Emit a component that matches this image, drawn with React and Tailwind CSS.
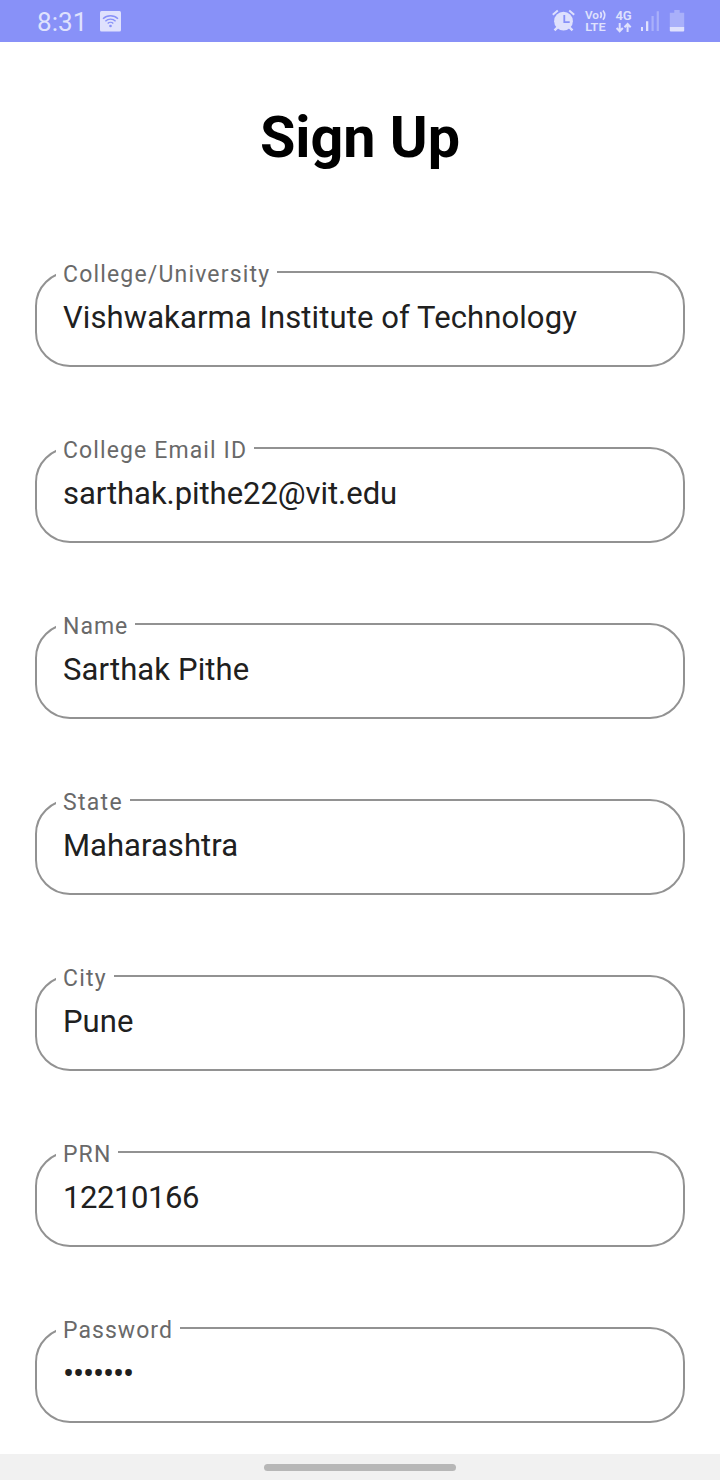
import React from "react";

const fields = [
  { label: "College/University", value: "Vishwakarma Institute of Technology", notch: "w-[221px] tracking-[1.17px]", spacing: "tracking-[0.1px]" },
  { label: "College Email ID", value: "sarthak.pithe22@vit.edu", notch: "w-[198px] tracking-[1.12px]", spacing: "tracking-[-0.05px]" },
  { label: "Name", value: "Sarthak Pithe", notch: "w-[79px] tracking-[1px]", spacing: "tracking-[0.12px]" },
  { label: "State", value: "Maharashtra", notch: "w-[74px] tracking-[1.3px]", spacing: "tracking-[0.04px]" },
  { label: "City", value: "Pune", notch: "w-[58px] tracking-[1.2px]", spacing: "tracking-[0.04px]" },
  { label: "PRN", value: "12210166", notch: "w-[62px] tracking-[1.1px]", spacing: "tracking-[-0.42px]" },
  { label: "Password", value: "•••••••", notch: "w-[124px] tracking-[1.05px]", secret: true },
];

function StatusBar() {
  return (
    <header className="flex h-[42px] shrink-0 items-center bg-[#8891f8] text-[#dfe1fd]">
      <span className="ml-[37px] w-[50px] whitespace-nowrap text-[26px] leading-[42px] tracking-[0.1px] pt-[2px]">8:31</span>
      <svg className="ml-[13px]" width="21" height="21" viewBox="0 0 21 21">
        <rect width="21" height="20.5" rx="1.5" fill="#dfe1fd" />
        <g fill="none" stroke="#8891f8" strokeWidth="1.4">
          <path d="M3 7.8a10.6 10.6 0 0 1 15 0" />
          <path d="M5.4 10.2a7.2 7.2 0 0 1 10.2 0" />
          <path d="M7.7 12.5a4 4 0 0 1 5.6 0" />
        </g>
        <circle cx="10.5" cy="15" r="1.3" fill="#8891f8" />
      </svg>
      <svg className="ml-auto mr-[35px]" width="134" height="42" viewBox="551 0 134 42">
        <g fill="none" stroke="#dfe1fd">
          <path d="M552.8 14.8l5-4.2M574.2 14.8l-5-4.2" strokeWidth="2" />
          <path d="M557.5 27.3l-3 3M569.5 27.3l3 3" strokeWidth="2.4" />
        </g>
        <circle cx="563.5" cy="21.2" r="9.4" fill="#dfe1fd" />
        <path d="M564.3 15v7.2h5.4" fill="none" stroke="#8891f8" strokeWidth="1.8" />
        <g fill="#dfe1fd" fontFamily="Roboto, sans-serif" fontWeight="600">
          <text x="585" y="18.8" fontSize="11.5" textLength="14" lengthAdjust="spacingAndGlyphs">Vo</text>
          <text x="585.2" y="31.2" fontSize="11.8" textLength="20.4" lengthAdjust="spacingAndGlyphs">LTE</text>
          <text x="615.4" y="20" fontSize="13" textLength="16.4" lengthAdjust="spacingAndGlyphs">4G</text>
        </g>
        <g fill="none" stroke="#dfe1fd" strokeWidth="1.6">
          <path d="M600.4 12q2 3 0 6.2M603 10.4q3.6 4.7 0 9.4" />
        </g>
        <path d="M619.7 23v8M616.6 28l3.1 3.2 3.1-3.2M627.6 32v-8M624.5 27.2l3.1-3.2 3.1 3.2" fill="none" stroke="#dfe1fd" strokeWidth="2" />
        <path d="M641 27h2v4h-2zM646 21.3h2.3v9.7H646z" fill="#dfe1fd" />
        <path d="M651.5 16h2.2v15h-2.2zM656.7 11.3h2.2V31h-2.2z" fill="#a9b0fa" />
        <path d="M674.3 10h5.4v2.8h4.5v14.4h-14.4V12.8h4.5z" fill="#a9b0fa" />
        <path d="M669.8 27h14.4v3.5q0 1-1 1h-12.4q-1 0-1-1z" fill="#dfe1fd" />
      </svg>
    </header>
  );
}

function OutlinedField({ label, value, notch, spacing, secret }) {
  return (
    <div className="relative h-24 shrink-0 rounded-[35px] border-2 border-[#929292] pl-[26px]">
      <span className={`absolute left-[19px] -top-[13px] h-8 whitespace-nowrap bg-white pl-[7px] text-[23px] leading-[29px] font-[370] text-[#696969] ${notch}`}>
        {label}
      </span>
      {secret ? (
        <div className="relative pt-[21px] text-[33px] leading-[48px] tracking-[-1.15px] text-[#202020]">{value}</div>
      ) : (
        <div className={`relative whitespace-nowrap pt-[21px] text-[31px] leading-[48px] font-[380] text-[#202020] ${spacing}`}>{value}</div>
      )}
    </div>
  );
}

export default function App() {
  return (
    <div className="flex h-[1480px] w-[720px] flex-col overflow-hidden bg-white font-['Roboto',sans-serif]">
      <StatusBar />
      <main className="flex grow flex-col px-[35px] pt-[61px]">
        <h1 className="h-[168px] text-center text-[57.5px] font-bold leading-[70px] text-black">Sign Up</h1>
        <div className="flex flex-col gap-20">
          {fields.map((f) => (
            <OutlinedField key={f.label} {...f} />
          ))}
        </div>
      </main>
      <footer className="flex h-[26px] shrink-0 items-center justify-center bg-[#f1f1f1]">
        <div className="mt-px h-[7px] w-48 rounded-full bg-[#b7b7b7]" />
      </footer>
    </div>
  );
}
